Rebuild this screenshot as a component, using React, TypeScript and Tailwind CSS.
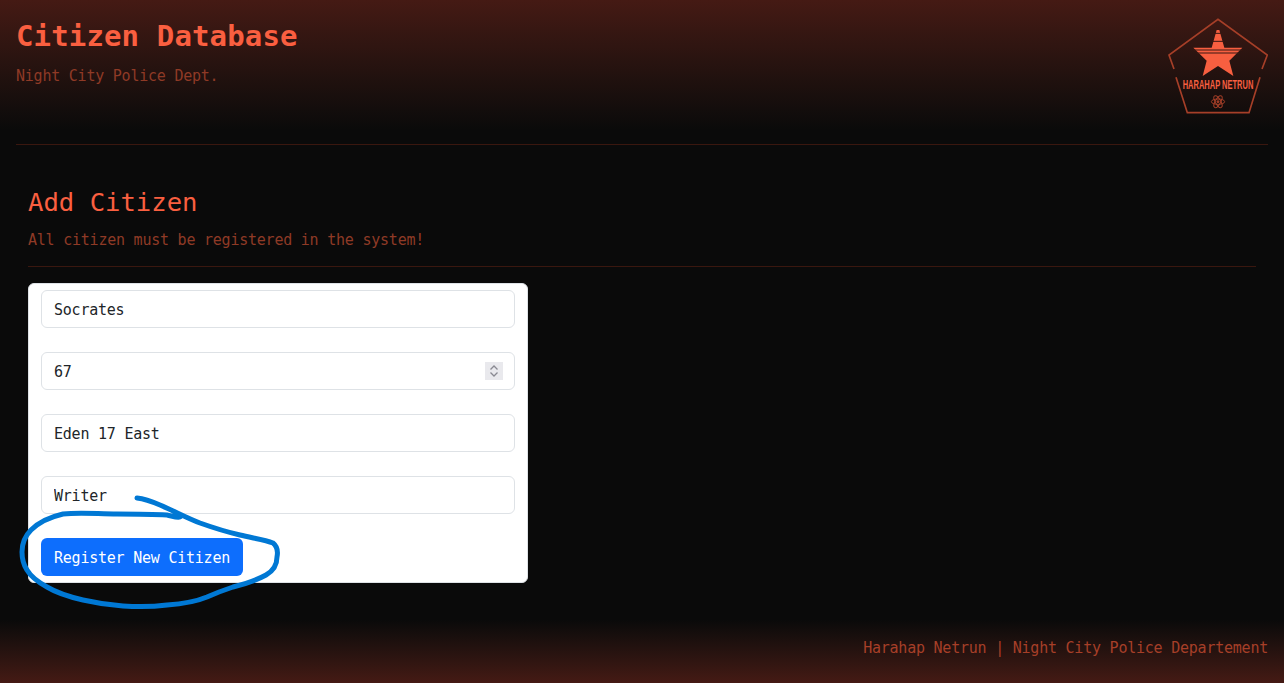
const mono = "font-['DejaVu_Sans_Mono','Liberation_Mono',monospace]";

function Logo() {
  return (
    <svg className="h-[100px] w-[100px] shrink-0" viewBox="54 48 300 300" fill="none">
      {/* pentagon, broken either side of the name */}
      <path
        d="M72 207 L57 165 L204 58 L352 165 L336 207 M330 232 L297 338 L112 338 L78 232"
        stroke="#a63f28"
        strokeWidth="5"
      />
      {/* star with spire */}
      <path
        d="M200 90 L208 90 L223 143 L277 143 L238 182 L250 228 L204 198 L158 228 L170 182 L130 143 L185 143 Z"
        fill="#f75f40"
      />
      <path d="M190 100 H218 M186 124 H222 M130 150 H278 M140 159 H268" stroke="#3a1812" strokeWidth="3" />
      <text
        transform="translate(204 266) scale(0.625 1)"
        textAnchor="middle"
        fontSize="36"
        fontWeight="700"
        fill="#f75f40"
        fontFamily="'Liberation Sans', sans-serif"
      >
        HARAHAP NETRUN
      </text>
      {/* atom */}
      <g stroke="#a63f28" strokeWidth="3">
        <ellipse cx="204" cy="305" rx="20" ry="8" />
        <ellipse cx="204" cy="305" rx="20" ry="8" transform="rotate(60 204 305)" />
        <ellipse cx="204" cy="305" rx="20" ry="8" transform="rotate(120 204 305)" />
        <circle cx="204" cy="305" r="3" fill="#a63f28" />
      </g>
    </svg>
  );
}

function Field({ value }: { value: string }) {
  return (
    <input
      defaultValue={value}
      className="h-[38px] w-full rounded-md border border-[#dee2e6] bg-white px-3 pt-[2px] text-[15px] tracking-[-0.23px] text-[#212529] outline-none"
    />
  );
}

export default function App() {
  return (
    <div className={`flex min-h-screen flex-col bg-[#0a0a0a] ${mono}`}>
      <header className="bg-gradient-to-b from-[#451a14] to-[#0a0a0a] to-90% px-4 pt-4">
        <div className="flex items-start justify-between pb-7">
          <div className="pt-px">
            <h1 className="mb-[9px] text-[29px] leading-[38px] font-bold tracking-[0.14px] text-[#fa5f40]">
              Citizen Database
            </h1>
            <p className="text-[15px] leading-6 tracking-[-0.23px] text-[#8f3a26]">Night City Police Dept.</p>
          </div>
          <Logo />
        </div>
        <div className="h-px bg-[#3a170f]" />
      </header>

      <main className="flex-1 px-7 pt-10">
        <h2 className="mb-[9px] text-[25.6px] leading-[34px] text-[#fa5f40]">Add Citizen</h2>
        <p className="mb-[14px] text-[15px] leading-6 tracking-[-0.23px] text-[#8f3a26]">
          All citizen must be registered in the system!
        </p>
        <div className="mb-4 h-px bg-[#3a170f]" />
        <form className="flex w-[500px] flex-col gap-6 rounded-md border border-[#dee2e6] bg-white px-3 py-1.5">
          <Field value="Socrates" />
          <div className="relative">
            <Field value="67" />
            <div className="absolute top-[10px] right-3 flex h-[18px] w-[18px] flex-col items-center justify-center bg-[#e9e9ed]">
              <svg className="h-[18px] w-[18px]" viewBox="0 0 18 18" fill="none" stroke="#8a8a92" strokeWidth="1.3">
                <path d="M5.5 7.5 L9 4 L12.5 7.5 M5.5 10.5 L9 14 L12.5 10.5" />
              </svg>
            </div>
          </div>
          <Field value="Eden 17 East" />
          <Field value="Writer" />
          <button
            type="button"
            className="h-[38px] w-[202px] rounded-md bg-[#0d6efd] px-3 pt-[2px] text-[15px] tracking-[-0.23px] text-white"
          >
            Register New Citizen
          </button>
        </form>
      </main>

      <footer className="flex h-[63px] justify-end bg-gradient-to-t from-[#451a14] to-[#0a0a0a] px-4 pt-4">
        <p className="text-[15px] leading-6 tracking-[-0.23px] text-[#a63f28]">
          Harahap Netrun | Night City Police Departement
        </p>
      </footer>

      {/* hand-drawn marker ring over the button */}
      <svg className="pointer-events-none absolute top-0 left-0 h-[683px] w-[1284px]" viewBox="0 0 1284 683" fill="none">
        <path
          d="M137 498 C146 499 153 502 160 505 C174 511 187 518 200 523 C214 528 227 532 240 535 C252 538 265 540 273 543 C278 547 278 552 277 557 C277 565 273 571 266 575 C257 580 245 584 233 587 C224 590 216 593 207 597 C195 602 181 604 167 605 C152 607 138 607 123 606 C109 605 96 603 83 600 C70 597 57 593 47 587 C38 582 31 577 27 570 C23 564 22 558 22 552 C22 544 25 536 31 530 C39 522 50 517 63 514 C80 512 98 514 117 514 C134 514 150 514 167 515 C172 516 177 518 180 517"
          stroke="#0078d4"
          strokeWidth="5"
          strokeLinecap="round"
        />
      </svg>
    </div>
  );
}
